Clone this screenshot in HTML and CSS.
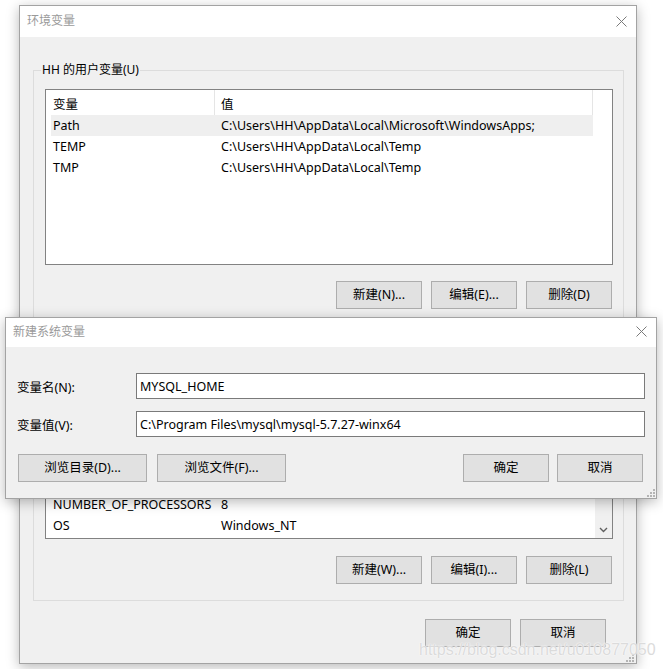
FILE: index.html
```html
<!DOCTYPE html>
<html lang="zh-CN">
<head>
<meta charset="utf-8">
<title>环境变量</title>
<link rel="stylesheet" href="styles.css">
</head>
<body>
<div class="desk">
  <div class="win main-win">
    <div class="titlebar">
      <span class="title">环境变量</span>
      <span class="close"><svg width="11" height="11" viewBox="0 0 11 11"><path d="M0.5 0.5 L10.5 10.5 M10.5 0.5 L0.5 10.5" stroke="#7a7a7a" stroke-width="1" fill="none"/></svg></span>
    </div>
    <div class="win-body">
      <fieldset class="group group-user">
        <legend>HH 的用户变量(U)</legend>
        <div class="list list-user">
          <div class="lhead">
            <div class="c1">变量</div>
            <div class="c2">值</div>
          </div>
          <div class="row sel"><div class="c1">Path</div><div class="c2">C:\Users\HH\AppData\Local\Microsoft\WindowsApps;</div></div>
          <div class="row"><div class="c1">TEMP</div><div class="c2">C:\Users\HH\AppData\Local\Temp</div></div>
          <div class="row"><div class="c1">TMP</div><div class="c2">C:\Users\HH\AppData\Local\Temp</div></div>
        </div>
        <div class="btnrow">
          <button class="btn">新建(N)...</button>
          <button class="btn">编辑(E)...</button>
          <button class="btn">删除(D)</button>
        </div>
      </fieldset>

      <fieldset class="group group-sys">
        <legend></legend>
        <div class="list list-sys">
          <div class="sys-main">
            <div class="sys-rows">
              <div class="row"><div class="c1">NUMBER_OF_PROCESSORS</div><div class="c2">8</div></div>
              <div class="row"><div class="c1">OS</div><div class="c2">Windows_NT</div></div>
            </div>
          </div>
          <div class="vscroll">
            <span class="sarrow"><svg width="9" height="6" viewBox="0 0 9 6"><polyline points="1,5 4.5,1.5 8,5" fill="none" stroke="#606060" stroke-width="1.4"/></svg></span>
            <span class="strack"><span class="sthumb"></span></span>
            <span class="sarrow"><svg width="9" height="6" viewBox="0 0 9 6"><polyline points="1,1 4.5,4.5 8,1" fill="none" stroke="#606060" stroke-width="1.4"/></svg></span>
          </div>
        </div>
        <div class="btnrow btnrow-sys">
          <button class="btn">新建(W)...</button>
          <button class="btn">编辑(I)...</button>
          <button class="btn">删除(L)</button>
        </div>
      </fieldset>

      <div class="btnrow main-btns">
        <button class="btn">确定</button>
        <button class="btn">取消</button>
      </div>
    </div>
    <span class="grip"><svg width="9" height="9" viewBox="0 0 9 9"><g fill="#b4b4b4"><rect x="7" y="1" width="2" height="2"/><rect x="4" y="4" width="2" height="2"/><rect x="7" y="4" width="2" height="2"/><rect x="1" y="7" width="2" height="2"/><rect x="4" y="7" width="2" height="2"/><rect x="7" y="7" width="2" height="2"/></g></svg></span>
  </div>

  <div class="win dlg">
    <div class="titlebar dlg-titlebar">
      <span class="title">新建系统变量</span>
      <span class="close"><svg width="11" height="11" viewBox="0 0 11 11"><path d="M0.5 0.5 L10.5 10.5 M10.5 0.5 L0.5 10.5" stroke="#7a7a7a" stroke-width="1" fill="none"/></svg></span>
    </div>
    <div class="dlg-body">
      <div class="form">
        <label class="flabel">变量名(N):</label>
        <div class="field">MYSQL_HOME</div>
        <label class="flabel">变量值(V):</label>
        <div class="field">C:\Program Files\mysql\mysql-5.7.27-winx64</div>
      </div>
      <div class="dlg-btns">
        <button class="btn btn-wide">浏览目录(D)...</button>
        <button class="btn btn-wide">浏览文件(F)...</button>
        <span class="spacer"></span>
        <button class="btn">确定</button>
        <button class="btn">取消</button>
      </div>
    </div>
    <span class="grip"><svg width="9" height="9" viewBox="0 0 9 9"><g fill="#b4b4b4"><rect x="7" y="1" width="2" height="2"/><rect x="4" y="4" width="2" height="2"/><rect x="7" y="4" width="2" height="2"/><rect x="1" y="7" width="2" height="2"/><rect x="4" y="7" width="2" height="2"/><rect x="7" y="7" width="2" height="2"/></g></svg></span>
  </div>

  <div class="watermark">https://blog.csdn.net/u010877050</div>
</div>
</body>
</html>
```

FILE: styles.css
```css
* { box-sizing: border-box; }

html, body {
  margin: 0;
  padding: 0;
  background: #ffffff;
}

body {
  font-family: "Noto Sans", "Noto Sans CJK SC", sans-serif;
  font-size: 12.5px;
  color: #000;
}

.desk {
  position: relative;
  width: 663px;
  height: 669px;
  overflow: hidden;
}

.win {
  position: absolute;
  border: 1px solid #a3a3a3;
  background: #f0f0f0;
  display: flex;
  flex-direction: column;
  box-shadow: 0 3px 12px rgba(0, 0, 0, 0.28);
}

.main-win {
  left: 19px;
  top: 5px;
  width: 618px;
  height: 659px;
}

.titlebar {
  height: 31px;
  flex: none;
  background: #ffffff;
  display: flex;
  align-items: center;
  justify-content: space-between;
  padding: 0 9px 1px 7px;
}

.title {
  color: #9a9a9a;
  font-size: 12px;
  line-height: 16px;
}

.close {
  display: flex;
  width: 11px;
  height: 11px;
}

.win-body {
  flex: 1;
  display: flex;
  flex-direction: column;
  min-height: 0;
}

/* group boxes */
.group {
  margin: 0 12px 0 13px;
  padding: 11px 10px 12px 11px;
  border: 1px solid #dcdcdc;
  min-width: 0;
}

.group legend {
  margin-left: -4px;
  padding: 0 1px;
  line-height: 16px;
  height: 16px;
  font-size: 12px;
}

.group-user { margin-top: 25px; }
.group-sys { margin-top: 6px; padding-bottom: 16px; }

/* lists */
.list {
  border: 1px solid #828282;
  background: #ffffff;
}

.list-user {
  height: 176px;
}

.list-sys {
  height: 184px;
  display: flex;
}

.sys-main {
  flex: 1;
  display: flex;
  flex-direction: column;
  min-width: 0;
}

.sys-rows {
  flex: 1;
  display: flex;
  flex-direction: column;
  justify-content: flex-end;
  padding-bottom: 2px;
  overflow: hidden;
}

.lhead {
  display: flex;
  height: 25px;
  margin-left: 5px;
  flex: none;
}

.lhead .c1,
.lhead .c2 {
  border-right: 1px solid #e5e5e5;
  display: flex;
  align-items: center;
  padding-top: 2px;
}

.row {
  display: flex;
  height: 21px;
  margin-left: 5px;
  width: 542px;
  align-items: center;
  flex: none;
}

.row.sel { background: #efefef; }

.c1 {
  width: 164px;
  padding-left: 2px;
  white-space: nowrap;
  flex: none;
}

.c2 {
  width: 378px;
  padding-left: 6px;
  white-space: nowrap;
  flex: none;
}

.vscroll {
  width: 17px;
  flex: none;
  background: #f0f0f0;
  display: flex;
  flex-direction: column;
}

.sarrow {
  height: 17px;
  display: flex;
  align-items: center;
  justify-content: center;
  flex: none;
}

.strack {
  flex: 1;
  display: flex;
  flex-direction: column;
  justify-content: flex-start;
  padding: 2px 1px 0;
}

.sthumb {
  height: 40px;
  background: #cdcdcd;
}

/* buttons */
.btnrow {
  display: flex;
  justify-content: flex-end;
  gap: 9px;
  margin-top: 16px;
  padding-right: 1px;
}

.btnrow-sys { margin-top: 17px; }

.btn {
  width: 86px;
  height: 28px;
  background: #e1e1e1;
  border: 1px solid #adadad;
  font-family: "Noto Sans", "Noto Sans CJK SC", sans-serif;
  font-size: 12.5px;
  color: #000;
  padding: 0;
  margin: 0;
  display: flex;
  align-items: center;
  justify-content: center;
  line-height: 16px;
  flex: none;
}

.main-btns {
  margin-top: 18px;
  padding-right: 30px;
}

/* dialog */
.dlg {
  left: 5px;
  top: 317px;
  width: 652px;
  height: 182px;
}

.dlg-titlebar {
  height: 29px;
  padding-bottom: 2px;
}

.dlg-body {
  flex: 1;
  padding: 26px 11px 16px 11px;
  display: flex;
  flex-direction: column;
}

.form {
  display: grid;
  grid-template-columns: 119px 1fr;
  grid-auto-rows: 26px;
  row-gap: 12px;
}

.flabel {
  display: flex;
  align-items: center;
  padding-top: 1px;
}

.field {
  border: 1px solid #7a7a7a;
  background: #ffffff;
  display: flex;
  align-items: center;
  padding: 0 3px;
  white-space: nowrap;
}

.dlg-btns {
  display: flex;
  margin-top: 17px;
  padding-left: 1px;
  padding-right: 2px;
  gap: 10px;
}

.dlg-btns .btn + .btn { margin-left: -2px; }
.dlg-btns .btn-wide + .btn-wide { margin-left: 0; }

.btn-wide { width: 129px; }

.spacer { flex: 1; }

.grip {
  position: absolute;
  right: 1px;
  bottom: 1px;
  width: 9px;
  height: 9px;
  display: flex;
}

.main-win .grip {
  right: 2px;
  bottom: 1px;
}

.watermark {
  position: absolute;
  left: 419px;
  top: 640px;
  font-family: "Liberation Sans", Arial, sans-serif;
  font-size: 16px;
  line-height: 20px;
  color: rgba(210, 210, 210, 0.8);
  text-shadow: 0 0 1px #ffffff, 0 0 2px rgba(255, 255, 255, 0.9);
  white-space: nowrap;
}
```
